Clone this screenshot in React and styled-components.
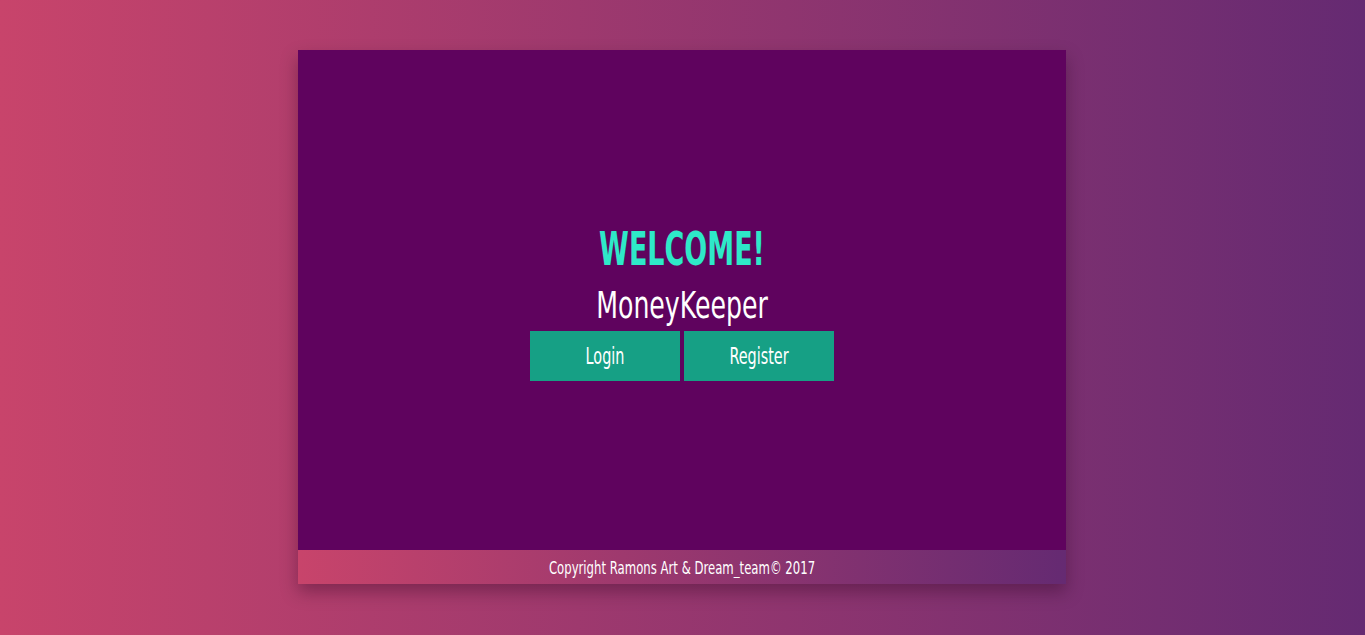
// modules
import React from "react";
import styled, { createGlobalStyle } from "styled-components";

//styles
const GlobalStyle = createGlobalStyle`
  html, body {
    margin: 0;
    padding: 0;
    height: 100%;
  }
  body {
    font-family: "DejaVu Sans Condensed", "Liberation Sans", sans-serif;
    background: linear-gradient(to right, #c8446b 0%, #652a72 100%);
  }
  #root {
    min-height: 100vh;
  }
`;

const Page = styled.div`
  display: flex;
  justify-content: center;
  padding: 50px 1px 0 0;
  min-height: 100vh;
  box-sizing: border-box;
`;

const Card = styled.div`
  width: 768px;
  height: 534px;
  display: flex;
  flex-direction: column;
  background-color: #5f035e;
  box-shadow: 0 8px 16px rgba(40, 0, 30, 0.35);
`;

const Main = styled.main`
  flex: 1;
  display: flex;
  flex-direction: column;
  align-items: center;
  justify-content: center;
  padding-top: 6px;
`;

const Title = styled.h1`
  margin: 0;
  font-size: 30px;
  font-weight: 700;
  line-height: 50px;
  color: #2ee9c8;
  transform: scaleY(1.52);
`;

const AppName = styled.h2`
  margin: 6px 0 0;
  font-size: 28px;
  font-weight: 400;
  line-height: 50px;
  color: #ffffff;
  transform: scaleY(1.36);
`;

const Buttons = styled.div`
  display: flex;
  gap: 4px;
`;

const Button = styled.button`
  width: 150px;
  height: 50px;
  border: none;
  background-color: #16a085;
  color: #ffffff;
  font-family: inherit;
  font-size: 16px;
  cursor: pointer;
  padding: 0;

  span {
    display: inline-block;
    transform: scaleY(1.45);
  }
`;

const Footer = styled.footer`
  height: 34px;
  display: flex;
  align-items: center;
  justify-content: center;
  background: linear-gradient(to right, #c8446b 0%, #652a72 100%);
  color: #ffffff;
  font-size: 13px;

  span {
    display: inline-block;
    transform: scaleY(1.37);
  }
`;

export default function App() {
  return (
    <>
      <GlobalStyle />
      <Page>
        <Card>
          <Main>
            <Title>WELCOME!</Title>
            <AppName>MoneyKeeper</AppName>
            <Buttons>
              <Button>
                <span>Login</span>
              </Button>
              <Button>
                <span>Register</span>
              </Button>
            </Buttons>
          </Main>
          <Footer>
            <span>Copyright Ramons Art &amp; Dream_team© 2017</span>
          </Footer>
        </Card>
      </Page>
    </>
  );
}
